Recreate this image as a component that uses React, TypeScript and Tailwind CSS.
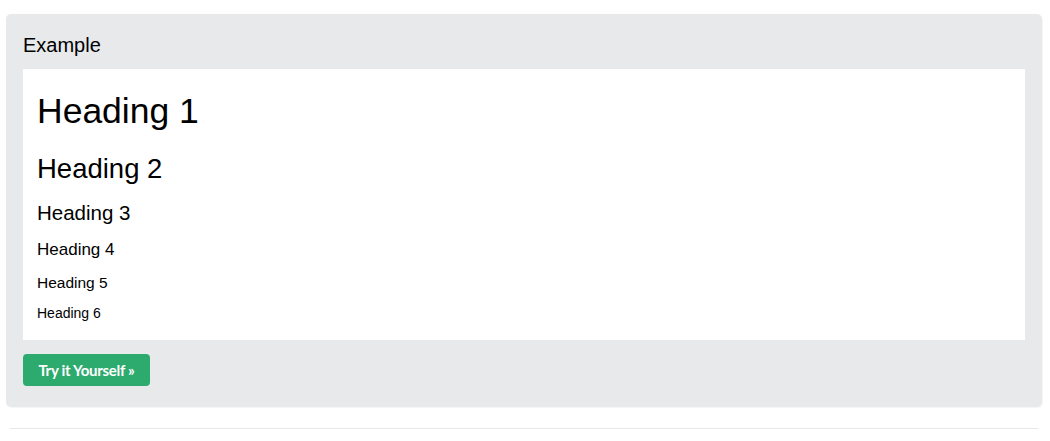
export default function App() {
  return (
    <div className="w-[1050px] h-[441px] bg-white pt-[14px]" style={{ fontFamily: '"Liberation Sans", Arial, sans-serif' }}>
      <div className="ml-[6px] w-[1036px] rounded-[5px] bg-[#E7E9EB] px-[17px] pt-[19px] pb-[21px] shadow-[1px_1px_1px_rgba(0,0,0,0.04)]">
        <h2 className="text-[20px] leading-[24px] text-black font-normal">Example</h2>
        <div className="mt-[12px] bg-white pl-[14px] pt-[22px] pb-[19px] text-black">
          <h1 className="text-[35.5px] leading-[40px] font-normal">Heading 1</h1>
          <h2 className="mt-[22px] text-[27.5px] leading-[32px] font-normal">Heading 2</h2>
          <h3 className="mt-[16px] text-[20.5px] leading-[24px] font-normal">Heading 3</h3>
          <h4 className="mt-[15px] text-[17px] leading-[20px] font-normal">Heading 4</h4>
          <h5 className="mt-[14px] text-[15.5px] leading-[18px] font-normal">Heading 5</h5>
          <h6 className="mt-[13px] text-[14px] leading-[16px] font-normal">Heading 6</h6>
        </div>
        <button
          className="mt-[14px] flex h-[32px] w-[127px] items-center justify-center rounded-[4px] bg-[#2daa6e] text-[15px] font-bold tracking-[-0.3px] text-white"
          style={{ fontFamily: 'Lato, "Open Sans", sans-serif' }}
        >
          Try it Yourself »
        </button>
      </div>
      <div className="mt-[21px] ml-[10px] w-[1028px] h-px bg-[#e8e8e8]" />
    </div>
  );
}
